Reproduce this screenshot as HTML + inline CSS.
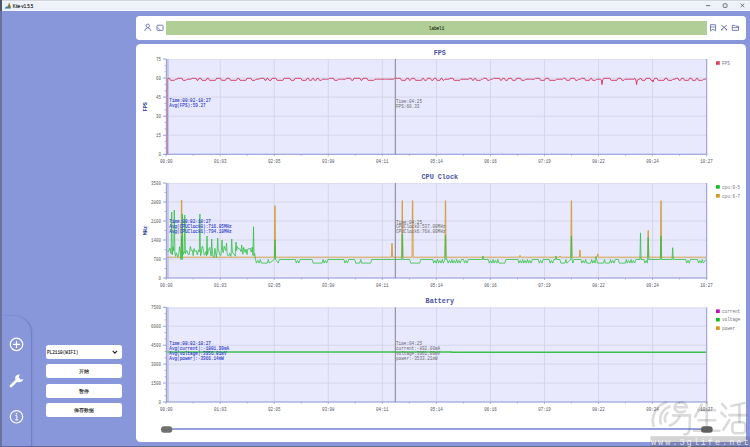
<!DOCTYPE html>
<html><head><meta charset="utf-8">
<style>
html,body{margin:0;padding:0;}
body{width:750px;height:447px;overflow:hidden;position:relative;background:#8896da;font-family:"Liberation Sans",sans-serif;}
.abs{position:absolute;}
#lb{left:0;top:0;width:1.8px;height:447px;background:#68749f;}
#title{left:2px;top:0;width:748px;height:11px;background:#edf1f9;border-top:1px solid #d2d6dc;box-sizing:border-box;box-shadow:inset 0 0.6px 0 #f6f9fd, inset 0 -0.8px 0 #f7f9fd;}
#ttext{left:13px;top:2.2px;font-size:6px;color:#202020;letter-spacing:-0.1px;}
#side{left:2px;top:315.5px;width:29px;height:140px;background:#8896da;border-top-right-radius:17px;box-shadow:1px 0 1.5px rgba(60,70,140,0.35);}
.btn{left:46px;width:76px;height:14px;background:#fff;border-radius:2.5px;font-size:5px;color:#202020;text-align:center;line-height:14px;-webkit-text-stroke:0.12px #202020;}
#topp{left:136px;top:15.7px;width:610px;height:24px;background:#fff;border-radius:3.5px;}
#green{left:166px;top:21px;width:541px;height:13.8px;background:#b0ce96;font-family:"Liberation Mono",monospace;font-size:4.6px;color:#404a38;text-align:center;line-height:13.8px;}
#mainp{left:135.8px;top:44.3px;width:610.4px;height:397.4px;background:#fff;border-radius:4.5px;}
svg{position:absolute;left:0;top:0;}
#bot{left:0;top:445.9px;width:750px;height:1.1px;background:#626a9a;}
</style></head><body>
<div class="abs" id="title"></div>
<svg width="750" height="12" viewBox="0 0 750 12">
  <path d="M4.8 8.6 Q5.6 6.2 7.8 6.6 L10.8 7.3 L10.8 8.6 Z" fill="#2378a8"/>
  <path d="M7.2 7.5 L9.2 2.4 L11 7.5Z" fill="#8a7a3a"/>
  <path d="M5.2 6.8 Q6.5 5.8 7.6 6.4 L7.3 7.4 Z" fill="#6fc6d8"/>
  <line x1="706" y1="5.6" x2="710.3" y2="5.6" stroke="#404040" stroke-width="0.7"/>
  <rect x="723.2" y="3.8" width="3.8" height="3.6" rx="0.8" fill="none" stroke="#404040" stroke-width="0.7"/>
  <path d="M740.6 3.7 L744.2 7.2 M744.2 3.7 L740.6 7.2" stroke="#404040" stroke-width="0.7"/>
</svg>
<svg width="750" height="12" viewBox="0 0 750 12"><text x="12.8" y="7.7" font-family='"Liberation Sans", sans-serif' font-size="5.8" fill="#111" stroke="#111" stroke-width="0.15" textLength="20.4" lengthAdjust="spacingAndGlyphs">Kite-v1.5.5</text></svg>
<div class="abs" id="lb"></div><div class="abs" style="left:0;top:0;width:1.8px;height:11px;background:#4c5468;"></div>
<div class="abs" id="side"></div>
<svg width="40" height="447" viewBox="0 0 40 447">
  <circle cx="16.5" cy="344.4" r="6.2" fill="none" stroke="#fff" stroke-width="1.2"/>
  <path d="M16.5 340.8 V348 M12.9 344.4 H20.1" stroke="#fff" stroke-width="1.2"/>
  <path d="M11 386 L17.8 379.4" stroke="#fff" stroke-width="2.7" stroke-linecap="round"/>
  <path d="M15.6 376.2 A4.2 4.2 0 1 0 23.4 379.2 L20.6 379.6 L18.9 377.6 L19.6 374.6 A4.2 4.2 0 0 0 15.6 376.2Z" fill="#fff"/>
  <circle cx="16.5" cy="416.8" r="6.2" fill="none" stroke="#fff" stroke-width="1.2"/>
  <circle cx="16.5" cy="413.7" r="0.8" fill="#fff"/>
  <path d="M15.3 415.6 H16.9 V419.8 M15.2 419.9 H18" stroke="#fff" stroke-width="1" fill="none"/>
</svg>
<div class="abs btn" style="top:345px;"></div>
<svg width="130" height="447" viewBox="0 0 130 447">
  <path d="M112.7 350.9 L114.9 353.1 L117.1 350.9" fill="none" stroke="#202020" stroke-width="1.1"/>
  <text x="47" y="354.2" font-family='"Liberation Mono", monospace' font-size="5.4" fill="#202020" stroke="#202020" stroke-width="0.12" textLength="31.5" lengthAdjust="spacingAndGlyphs">PL2110(WIFI)</text>
</svg>
<div class="abs btn" style="top:364.2px;">开始</div>
<div class="abs btn" style="top:383.5px;">暂停</div>
<div class="abs btn" style="top:402.6px;">保存数据</div>
<div class="abs" id="topp"></div>
<div class="abs" id="green"></div>
<svg width="750" height="40" viewBox="0 0 750 40"><text x="428.8" y="30" font-family='"Liberation Mono", monospace' font-size="5.4" fill="#283024" stroke="#283024" stroke-width="0.15" textLength="15.5" lengthAdjust="spacingAndGlyphs">label1</text></svg>
<svg width="750" height="447" viewBox="0 0 750 447">
  <!-- person -->
  <circle cx="147.8" cy="25.8" r="1.7" fill="none" stroke="#5a62a8" stroke-width="0.8"/>
  <path d="M144.6 31 Q145.5 27.8 147.8 27.8 Q150.1 27.8 151 31" fill="none" stroke="#5a62a8" stroke-width="0.8"/>
  <!-- image -->
  <rect x="157" y="25.2" width="6" height="5.2" rx="0.6" fill="none" stroke="#5a62a8" stroke-width="0.8"/>
  <path d="M157.4 27.2 L160 29.8" stroke="#5a62a8" stroke-width="0.7"/>
  <!-- save -->
  <path d="M710.5 24.7 H715.6 V30.8 L713 29.3 L710.5 30.8 Z" fill="none" stroke="#5a62a8" stroke-width="0.8"/>
  <path d="M710.5 27 H715.6" stroke="#5a62a8" stroke-width="0.7"/>
  <!-- scissors -->
  <path d="M721.4 25.2 L726.8 29.6 M726.8 25.2 L721.4 29.6" stroke="#5a62a8" stroke-width="0.9"/>
  <circle cx="721.8" cy="29.8" r="0.8" fill="#5a62a8"/><circle cx="726.4" cy="29.8" r="0.8" fill="#5a62a8"/>
  <!-- folder -->
  <path d="M732.3 25.4 H735 L735.8 26.3 H738.5 V30.4 H732.3 Z" fill="none" stroke="#5a62a8" stroke-width="0.8"/>
  <path d="M732.3 27.6 H738.5" stroke="#5a62a8" stroke-width="0.7"/>
</svg>
<div class="abs" id="mainp"></div>
<svg width="750" height="447" viewBox="0 0 750 447">
<text x="439.8" y="54.8" font-family='"Liberation Mono", monospace' font-size="8.0" font-weight="bold" fill="#4a52a0" text-anchor="middle" textLength="12.18" lengthAdjust="spacingAndGlyphs" >FPS</text>
<rect x="166.2" y="59" width="540.4" height="95.3" fill="#e9e9fe"/>
<line x1="166.2" y1="59.7" x2="706.6" y2="59.7" stroke="#dcdcf0" stroke-width="1"/>
<text x="161.1" y="61.1" font-family='"Liberation Mono", monospace' font-size="5.4" font-weight="normal" fill="#585858" text-anchor="end" textLength="5" lengthAdjust="spacingAndGlyphs" >75</text>
<line x1="163" y1="59" x2="166.2" y2="59" stroke="#8088c8" stroke-width="0.8"/>
<line x1="164.5" y1="65.35" x2="166.2" y2="65.35" stroke="#8088c8" stroke-width="0.6"/>
<line x1="164.5" y1="71.71" x2="166.2" y2="71.71" stroke="#8088c8" stroke-width="0.6"/>
<line x1="166.2" y1="78.06" x2="706.6" y2="78.06" stroke="#d0d0e6" stroke-width="0.8"/>
<text x="161.1" y="80.16" font-family='"Liberation Mono", monospace' font-size="5.4" font-weight="normal" fill="#585858" text-anchor="end" textLength="5" lengthAdjust="spacingAndGlyphs" >60</text>
<line x1="163" y1="78.06" x2="166.2" y2="78.06" stroke="#8088c8" stroke-width="0.8"/>
<line x1="164.5" y1="84.41" x2="166.2" y2="84.41" stroke="#8088c8" stroke-width="0.6"/>
<line x1="164.5" y1="90.77" x2="166.2" y2="90.77" stroke="#8088c8" stroke-width="0.6"/>
<line x1="166.2" y1="97.12" x2="706.6" y2="97.12" stroke="#d0d0e6" stroke-width="0.8"/>
<text x="161.1" y="99.22" font-family='"Liberation Mono", monospace' font-size="5.4" font-weight="normal" fill="#585858" text-anchor="end" textLength="5" lengthAdjust="spacingAndGlyphs" >45</text>
<line x1="163" y1="97.12" x2="166.2" y2="97.12" stroke="#8088c8" stroke-width="0.8"/>
<line x1="164.5" y1="103.47" x2="166.2" y2="103.47" stroke="#8088c8" stroke-width="0.6"/>
<line x1="164.5" y1="109.83" x2="166.2" y2="109.83" stroke="#8088c8" stroke-width="0.6"/>
<line x1="166.2" y1="116.18" x2="706.6" y2="116.18" stroke="#d0d0e6" stroke-width="0.8"/>
<text x="161.1" y="118.28" font-family='"Liberation Mono", monospace' font-size="5.4" font-weight="normal" fill="#585858" text-anchor="end" textLength="5" lengthAdjust="spacingAndGlyphs" >30</text>
<line x1="163" y1="116.18" x2="166.2" y2="116.18" stroke="#8088c8" stroke-width="0.8"/>
<line x1="164.5" y1="122.53" x2="166.2" y2="122.53" stroke="#8088c8" stroke-width="0.6"/>
<line x1="164.5" y1="128.89" x2="166.2" y2="128.89" stroke="#8088c8" stroke-width="0.6"/>
<line x1="166.2" y1="135.24" x2="706.6" y2="135.24" stroke="#d0d0e6" stroke-width="0.8"/>
<text x="161.1" y="137.34" font-family='"Liberation Mono", monospace' font-size="5.4" font-weight="normal" fill="#585858" text-anchor="end" textLength="5" lengthAdjust="spacingAndGlyphs" >15</text>
<line x1="163" y1="135.24" x2="166.2" y2="135.24" stroke="#8088c8" stroke-width="0.8"/>
<line x1="164.5" y1="141.59" x2="166.2" y2="141.59" stroke="#8088c8" stroke-width="0.6"/>
<line x1="164.5" y1="147.95" x2="166.2" y2="147.95" stroke="#8088c8" stroke-width="0.6"/>
<text x="161.1" y="156.4" font-family='"Liberation Mono", monospace' font-size="5.4" font-weight="normal" fill="#585858" text-anchor="end" textLength="2.5" lengthAdjust="spacingAndGlyphs" >0</text>
<line x1="163" y1="154.3" x2="166.2" y2="154.3" stroke="#8088c8" stroke-width="0.8"/>
<line x1="166.2" y1="154.3" x2="166.2" y2="156.3" stroke="#8088c8" stroke-width="0.6"/>
<line x1="193.22" y1="154.3" x2="193.22" y2="155.8" stroke="#8088c8" stroke-width="0.6"/>
<text x="166.2" y="162.8" font-family='"Liberation Mono", monospace' font-size="5.4" font-weight="normal" fill="#505060" text-anchor="middle" textLength="12.5" lengthAdjust="spacingAndGlyphs" >00:00</text>
<line x1="220.24" y1="59" x2="220.24" y2="154.3" stroke="#d0d0e6" stroke-width="0.8"/>
<line x1="220.24" y1="154.3" x2="220.24" y2="156.3" stroke="#8088c8" stroke-width="0.6"/>
<line x1="247.26" y1="154.3" x2="247.26" y2="155.8" stroke="#8088c8" stroke-width="0.6"/>
<text x="220.24" y="162.8" font-family='"Liberation Mono", monospace' font-size="5.4" font-weight="normal" fill="#505060" text-anchor="middle" textLength="12.5" lengthAdjust="spacingAndGlyphs" >01:03</text>
<line x1="274.28" y1="59" x2="274.28" y2="154.3" stroke="#d0d0e6" stroke-width="0.8"/>
<line x1="274.28" y1="154.3" x2="274.28" y2="156.3" stroke="#8088c8" stroke-width="0.6"/>
<line x1="301.3" y1="154.3" x2="301.3" y2="155.8" stroke="#8088c8" stroke-width="0.6"/>
<text x="274.28" y="162.8" font-family='"Liberation Mono", monospace' font-size="5.4" font-weight="normal" fill="#505060" text-anchor="middle" textLength="12.5" lengthAdjust="spacingAndGlyphs" >02:05</text>
<line x1="328.32" y1="59" x2="328.32" y2="154.3" stroke="#d0d0e6" stroke-width="0.8"/>
<line x1="328.32" y1="154.3" x2="328.32" y2="156.3" stroke="#8088c8" stroke-width="0.6"/>
<line x1="355.34" y1="154.3" x2="355.34" y2="155.8" stroke="#8088c8" stroke-width="0.6"/>
<text x="328.32" y="162.8" font-family='"Liberation Mono", monospace' font-size="5.4" font-weight="normal" fill="#505060" text-anchor="middle" textLength="12.5" lengthAdjust="spacingAndGlyphs" >03:08</text>
<line x1="382.36" y1="59" x2="382.36" y2="154.3" stroke="#d0d0e6" stroke-width="0.8"/>
<line x1="382.36" y1="154.3" x2="382.36" y2="156.3" stroke="#8088c8" stroke-width="0.6"/>
<line x1="409.38" y1="154.3" x2="409.38" y2="155.8" stroke="#8088c8" stroke-width="0.6"/>
<text x="382.36" y="162.8" font-family='"Liberation Mono", monospace' font-size="5.4" font-weight="normal" fill="#505060" text-anchor="middle" textLength="12.5" lengthAdjust="spacingAndGlyphs" >04:11</text>
<line x1="436.4" y1="59" x2="436.4" y2="154.3" stroke="#d0d0e6" stroke-width="0.8"/>
<line x1="436.4" y1="154.3" x2="436.4" y2="156.3" stroke="#8088c8" stroke-width="0.6"/>
<line x1="463.42" y1="154.3" x2="463.42" y2="155.8" stroke="#8088c8" stroke-width="0.6"/>
<text x="436.4" y="162.8" font-family='"Liberation Mono", monospace' font-size="5.4" font-weight="normal" fill="#505060" text-anchor="middle" textLength="12.5" lengthAdjust="spacingAndGlyphs" >05:14</text>
<line x1="490.44" y1="59" x2="490.44" y2="154.3" stroke="#d0d0e6" stroke-width="0.8"/>
<line x1="490.44" y1="154.3" x2="490.44" y2="156.3" stroke="#8088c8" stroke-width="0.6"/>
<line x1="517.46" y1="154.3" x2="517.46" y2="155.8" stroke="#8088c8" stroke-width="0.6"/>
<text x="490.44" y="162.8" font-family='"Liberation Mono", monospace' font-size="5.4" font-weight="normal" fill="#505060" text-anchor="middle" textLength="12.5" lengthAdjust="spacingAndGlyphs" >06:16</text>
<line x1="544.48" y1="59" x2="544.48" y2="154.3" stroke="#d0d0e6" stroke-width="0.8"/>
<line x1="544.48" y1="154.3" x2="544.48" y2="156.3" stroke="#8088c8" stroke-width="0.6"/>
<line x1="571.5" y1="154.3" x2="571.5" y2="155.8" stroke="#8088c8" stroke-width="0.6"/>
<text x="544.48" y="162.8" font-family='"Liberation Mono", monospace' font-size="5.4" font-weight="normal" fill="#505060" text-anchor="middle" textLength="12.5" lengthAdjust="spacingAndGlyphs" >07:19</text>
<line x1="598.52" y1="59" x2="598.52" y2="154.3" stroke="#d0d0e6" stroke-width="0.8"/>
<line x1="598.52" y1="154.3" x2="598.52" y2="156.3" stroke="#8088c8" stroke-width="0.6"/>
<line x1="625.54" y1="154.3" x2="625.54" y2="155.8" stroke="#8088c8" stroke-width="0.6"/>
<text x="598.52" y="162.8" font-family='"Liberation Mono", monospace' font-size="5.4" font-weight="normal" fill="#505060" text-anchor="middle" textLength="12.5" lengthAdjust="spacingAndGlyphs" >08:22</text>
<line x1="652.56" y1="59" x2="652.56" y2="154.3" stroke="#d0d0e6" stroke-width="0.8"/>
<line x1="652.56" y1="154.3" x2="652.56" y2="156.3" stroke="#8088c8" stroke-width="0.6"/>
<line x1="679.58" y1="154.3" x2="679.58" y2="155.8" stroke="#8088c8" stroke-width="0.6"/>
<text x="652.56" y="162.8" font-family='"Liberation Mono", monospace' font-size="5.4" font-weight="normal" fill="#505060" text-anchor="middle" textLength="12.5" lengthAdjust="spacingAndGlyphs" >09:24</text>
<line x1="706.6" y1="154.3" x2="706.6" y2="156.3" stroke="#8088c8" stroke-width="0.6"/>
<text x="706.6" y="162.8" font-family='"Liberation Mono", monospace' font-size="5.4" font-weight="normal" fill="#505060" text-anchor="middle" textLength="12.5" lengthAdjust="spacingAndGlyphs" >10:27</text>
<rect x="166" y="59" width="2.8" height="95.3" fill="#c4c4e4"/>
<line x1="166.3" y1="59" x2="166.3" y2="154.3" stroke="#8890d0" stroke-width="0.8"/>
<polyline points="167.3,154.3 167.3,79" fill="none" stroke="#c088b0" stroke-width="1.5" stroke-linejoin="round"/>
<polyline points="167.4,79 168,78.3 169.5,78.3 170.5,80.3 174.5,80.3 175.5,79.2 177,79.2 178,78.3 182,78.3 183,80.3 186,80.3 187,79.2 191,79.2 192,78.3 196,78.3 197,80.3 198,80.3 199,78.3 201,78.3 202,80.3 206,80.3 207,78.3 208.5,78.3 209.5,80.3 215.5,80.3 216.5,78.3 220.5,78.3 221.5,80.3 225.5,80.3 226.5,78.3 229.5,78.3 230.5,80.3 236.5,80.3 237.5,78.3 239,78.3 240,80.3 246,80.3 247,78.3 251,78.3 252,80.3 255,80.3 256,79.2 257,79.2 258,79.2 259,79.2 260,78.3 264,78.3 265,80.3 266,80.3 267,78.3 268,78.3 269,80.3 271,80.3 272,78.3 276,78.3 277,80.3 283,80.3 284,78.3 290,78.3 291,80.3 294,80.3 295,78.3 301,78.3 302,80.3 306,80.3 307,78.3 308.5,78.3 309.5,80.3 311.5,80.3 312.5,78.3 313.5,78.3 314.5,80.3 316,80.3 317,78.3 318.5,78.3 319.5,80.3 321.5,80.3 322.5,79.2 325.5,79.2 326.5,79.2 328.5,79.2 329.5,78.3 333.5,78.3 334.5,80.3 337.5,80.3 338.5,79.2 340.5,79.2 341.5,79.2 345.5,79.2 346.5,78.3 350.5,78.3 351.5,80.3 353,80.3 354,78.3 360,78.3 361,80.3 362,80.3 363,78.3 367,78.3 368,80.3 374,80.3 375,79.2 376.5,79.2 377.5,79.2 379.5,79.2 380.5,79.2 384.5,79.2 385.5,79.2 386.5,79.2 387.5,79.2 393.5,79.2 394.5,78.3 400.5,78.3 401.5,80.3 405.5,80.3 406.5,78.3 408.5,78.3 409.5,80.3 410.5,80.3 411.5,78.3 414.5,78.3 415.5,80.3 421.5,80.3 422.5,78.3 423.5,78.3 424.5,80.3 426.5,80.3 427.5,78.3 430.5,78.3 431.5,80.3 433,80.3 434,78.3 436,78.3 437,80.3 440,80.3 441,78.3 442,78.3 443,80.3 444,80.3 445,79.2 449,79.2 450,78.3 453,78.3 454,80.3 460,80.3 461,79.2 463,79.2 464,79.2 466,79.2 467,79.2 468.5,79.2 469.5,78.3 471.5,78.3 472.5,80.3 473.5,80.3 474.5,78.3 475.5,78.3 476.5,80.3 480.5,80.3 481.5,79.2 482.5,79.2 483.5,78.3 486.5,78.3 487.5,80.3 489.5,80.3 490.5,79.2 492.5,79.2 493.5,78.3 499.5,78.3 500.5,80.3 501.5,80.3 502.5,78.3 504.5,78.3 505.5,80.3 507.5,80.3 508.5,78.3 511.5,78.3 512.5,80.3 515.5,80.3 516.5,78.3 520.5,78.3 521.5,80.3 524.5,80.3 525.5,79.2 529.5,79.2 530.5,79.2 534.5,79.2 535.5,78.3 539.5,78.3 540.5,80.3 544.5,80.3 545.5,78.3 548.5,78.3 549.5,80.3 555.5,80.3 556.5,79.2 562.5,79.2 563.5,78.3 565.5,78.3 566.5,80.3 569.5,80.3 570.5,78.3 574.5,78.3 575.5,80.3 577.5,80.3 578.5,79.2 580.5,79.2 581.5,78.3 584.5,78.3 585.5,80.3 589.5,80.3 590.5,78.3 591.5,78.3 592.5,80.3 595.5,80.3 596.5,79.2 600.5,79.2 601.3,80 602,84.6 602.7,80 603,79.2 604,78.3 610,78.3 611,80.3 617,80.3 618,78.3 621,78.3 622,80.3 624,80.3 625,79.2 627,79.2 628,79.2 634,79.2 635,78.3 635.9,80 636.6,84.6 637.3,80 641,78.3 642,80.3 645,80.3 646,78.3 650,78.3 651,80.3 652,80.3 652.3,80 653,82 653.7,80 654,79.2 655,78.3 657,78.3 658,80.3 664,80.3 665,78.3 667,78.3 668,80.3 672,80.3 673,79.2 675,79.2 676,78.3 678,78.3 679,80.3 680.5,80.3 681.5,78.3 683.5,78.3 684.5,80.3 688.5,80.3 689.5,78.3 691.5,78.3 692.5,80.3 695.5,80.3 696.5,78.3 697.5,78.3 698.5,80.3 702.5,80.3 703.5,79.2 706.3,79" fill="none" stroke="#d6426a" stroke-width="1.0" stroke-linejoin="round"/>
<line x1="166" y1="154.3" x2="707.4" y2="154.3" stroke="#8a92d4" stroke-width="1.05"/>
<line x1="706.6" y1="59" x2="706.6" y2="154.3" stroke="#a4a8dc" stroke-width="1.3"/>
<line x1="395.3" y1="59" x2="395.3" y2="154.3" stroke="#82828e" stroke-width="1"/>
<text x="0" y="0" font-family='"Liberation Mono", monospace' font-size="6.2" font-weight="bold" fill="#2a3aa0" text-anchor="middle" textLength="9.3" lengthAdjust="spacingAndGlyphs" transform="translate(146.9,106.75) rotate(-90)">FPS</text>
<text x="169.3" y="102.3" font-family='"Liberation Mono", monospace' font-size="5.4" font-weight="normal" fill="#2c3cc8" text-anchor="start" textLength="41.6" lengthAdjust="spacingAndGlyphs" stroke="#2c3cc8" stroke-width="0.1">Time:00:02-10:27</text>
<text x="169.3" y="107.2" font-family='"Liberation Mono", monospace' font-size="5.4" font-weight="normal" fill="#2c3cc8" text-anchor="start" textLength="36.4" lengthAdjust="spacingAndGlyphs" stroke="#2c3cc8" stroke-width="0.1">Avg(FPS):59.27</text>
<text x="396" y="102.7" font-family='"Liberation Mono", monospace' font-size="5.4" font-weight="normal" fill="#686868" text-anchor="start" textLength="26" lengthAdjust="spacingAndGlyphs" >Time:04:25</text>
<text x="396" y="107.6" font-family='"Liberation Mono", monospace' font-size="5.4" font-weight="normal" fill="#686868" text-anchor="start" textLength="23.4" lengthAdjust="spacingAndGlyphs" >FPS:60.33</text>
<rect x="716" y="61.2" width="3.8" height="3.6" fill="#e04060"/>
<text x="722" y="64.7" font-family='"Liberation Mono", monospace' font-size="5.4" font-weight="normal" fill="#707080" text-anchor="start" textLength="7.8" lengthAdjust="spacingAndGlyphs" >FPS</text>
<text x="439.8" y="178.6" font-family='"Liberation Mono", monospace' font-size="8.0" font-weight="bold" fill="#4a52a0" text-anchor="middle" textLength="36.54" lengthAdjust="spacingAndGlyphs" >CPU Clock</text>
<rect x="166.2" y="183" width="540.4" height="95" fill="#e9e9fe"/>
<line x1="166.2" y1="183.7" x2="706.6" y2="183.7" stroke="#dcdcf0" stroke-width="1"/>
<text x="161.1" y="185.1" font-family='"Liberation Mono", monospace' font-size="5.4" font-weight="normal" fill="#585858" text-anchor="end" textLength="10" lengthAdjust="spacingAndGlyphs" >3500</text>
<line x1="163" y1="183" x2="166.2" y2="183" stroke="#8088c8" stroke-width="0.8"/>
<line x1="164.5" y1="192.5" x2="166.2" y2="192.5" stroke="#8088c8" stroke-width="0.6"/>
<line x1="166.2" y1="202" x2="706.6" y2="202" stroke="#d0d0e6" stroke-width="0.8"/>
<text x="161.1" y="204.1" font-family='"Liberation Mono", monospace' font-size="5.4" font-weight="normal" fill="#585858" text-anchor="end" textLength="10" lengthAdjust="spacingAndGlyphs" >2800</text>
<line x1="163" y1="202" x2="166.2" y2="202" stroke="#8088c8" stroke-width="0.8"/>
<line x1="164.5" y1="211.5" x2="166.2" y2="211.5" stroke="#8088c8" stroke-width="0.6"/>
<line x1="166.2" y1="221" x2="706.6" y2="221" stroke="#d0d0e6" stroke-width="0.8"/>
<text x="161.1" y="223.1" font-family='"Liberation Mono", monospace' font-size="5.4" font-weight="normal" fill="#585858" text-anchor="end" textLength="10" lengthAdjust="spacingAndGlyphs" >2100</text>
<line x1="163" y1="221" x2="166.2" y2="221" stroke="#8088c8" stroke-width="0.8"/>
<line x1="164.5" y1="230.5" x2="166.2" y2="230.5" stroke="#8088c8" stroke-width="0.6"/>
<line x1="166.2" y1="240" x2="706.6" y2="240" stroke="#d0d0e6" stroke-width="0.8"/>
<text x="161.1" y="242.1" font-family='"Liberation Mono", monospace' font-size="5.4" font-weight="normal" fill="#585858" text-anchor="end" textLength="10" lengthAdjust="spacingAndGlyphs" >1400</text>
<line x1="163" y1="240" x2="166.2" y2="240" stroke="#8088c8" stroke-width="0.8"/>
<line x1="164.5" y1="249.5" x2="166.2" y2="249.5" stroke="#8088c8" stroke-width="0.6"/>
<line x1="166.2" y1="259" x2="706.6" y2="259" stroke="#d0d0e6" stroke-width="0.8"/>
<text x="161.1" y="261.1" font-family='"Liberation Mono", monospace' font-size="5.4" font-weight="normal" fill="#585858" text-anchor="end" textLength="7.5" lengthAdjust="spacingAndGlyphs" >700</text>
<line x1="163" y1="259" x2="166.2" y2="259" stroke="#8088c8" stroke-width="0.8"/>
<line x1="164.5" y1="268.5" x2="166.2" y2="268.5" stroke="#8088c8" stroke-width="0.6"/>
<text x="161.1" y="280.1" font-family='"Liberation Mono", monospace' font-size="5.4" font-weight="normal" fill="#585858" text-anchor="end" textLength="2.5" lengthAdjust="spacingAndGlyphs" >0</text>
<line x1="163" y1="278" x2="166.2" y2="278" stroke="#8088c8" stroke-width="0.8"/>
<line x1="166.2" y1="278" x2="166.2" y2="280" stroke="#8088c8" stroke-width="0.6"/>
<line x1="193.22" y1="278" x2="193.22" y2="279.5" stroke="#8088c8" stroke-width="0.6"/>
<text x="166.2" y="286.5" font-family='"Liberation Mono", monospace' font-size="5.4" font-weight="normal" fill="#505060" text-anchor="middle" textLength="12.5" lengthAdjust="spacingAndGlyphs" >00:00</text>
<line x1="220.24" y1="183" x2="220.24" y2="278" stroke="#d0d0e6" stroke-width="0.8"/>
<line x1="220.24" y1="278" x2="220.24" y2="280" stroke="#8088c8" stroke-width="0.6"/>
<line x1="247.26" y1="278" x2="247.26" y2="279.5" stroke="#8088c8" stroke-width="0.6"/>
<text x="220.24" y="286.5" font-family='"Liberation Mono", monospace' font-size="5.4" font-weight="normal" fill="#505060" text-anchor="middle" textLength="12.5" lengthAdjust="spacingAndGlyphs" >01:03</text>
<line x1="274.28" y1="183" x2="274.28" y2="278" stroke="#d0d0e6" stroke-width="0.8"/>
<line x1="274.28" y1="278" x2="274.28" y2="280" stroke="#8088c8" stroke-width="0.6"/>
<line x1="301.3" y1="278" x2="301.3" y2="279.5" stroke="#8088c8" stroke-width="0.6"/>
<text x="274.28" y="286.5" font-family='"Liberation Mono", monospace' font-size="5.4" font-weight="normal" fill="#505060" text-anchor="middle" textLength="12.5" lengthAdjust="spacingAndGlyphs" >02:05</text>
<line x1="328.32" y1="183" x2="328.32" y2="278" stroke="#d0d0e6" stroke-width="0.8"/>
<line x1="328.32" y1="278" x2="328.32" y2="280" stroke="#8088c8" stroke-width="0.6"/>
<line x1="355.34" y1="278" x2="355.34" y2="279.5" stroke="#8088c8" stroke-width="0.6"/>
<text x="328.32" y="286.5" font-family='"Liberation Mono", monospace' font-size="5.4" font-weight="normal" fill="#505060" text-anchor="middle" textLength="12.5" lengthAdjust="spacingAndGlyphs" >03:08</text>
<line x1="382.36" y1="183" x2="382.36" y2="278" stroke="#d0d0e6" stroke-width="0.8"/>
<line x1="382.36" y1="278" x2="382.36" y2="280" stroke="#8088c8" stroke-width="0.6"/>
<line x1="409.38" y1="278" x2="409.38" y2="279.5" stroke="#8088c8" stroke-width="0.6"/>
<text x="382.36" y="286.5" font-family='"Liberation Mono", monospace' font-size="5.4" font-weight="normal" fill="#505060" text-anchor="middle" textLength="12.5" lengthAdjust="spacingAndGlyphs" >04:11</text>
<line x1="436.4" y1="183" x2="436.4" y2="278" stroke="#d0d0e6" stroke-width="0.8"/>
<line x1="436.4" y1="278" x2="436.4" y2="280" stroke="#8088c8" stroke-width="0.6"/>
<line x1="463.42" y1="278" x2="463.42" y2="279.5" stroke="#8088c8" stroke-width="0.6"/>
<text x="436.4" y="286.5" font-family='"Liberation Mono", monospace' font-size="5.4" font-weight="normal" fill="#505060" text-anchor="middle" textLength="12.5" lengthAdjust="spacingAndGlyphs" >05:14</text>
<line x1="490.44" y1="183" x2="490.44" y2="278" stroke="#d0d0e6" stroke-width="0.8"/>
<line x1="490.44" y1="278" x2="490.44" y2="280" stroke="#8088c8" stroke-width="0.6"/>
<line x1="517.46" y1="278" x2="517.46" y2="279.5" stroke="#8088c8" stroke-width="0.6"/>
<text x="490.44" y="286.5" font-family='"Liberation Mono", monospace' font-size="5.4" font-weight="normal" fill="#505060" text-anchor="middle" textLength="12.5" lengthAdjust="spacingAndGlyphs" >06:16</text>
<line x1="544.48" y1="183" x2="544.48" y2="278" stroke="#d0d0e6" stroke-width="0.8"/>
<line x1="544.48" y1="278" x2="544.48" y2="280" stroke="#8088c8" stroke-width="0.6"/>
<line x1="571.5" y1="278" x2="571.5" y2="279.5" stroke="#8088c8" stroke-width="0.6"/>
<text x="544.48" y="286.5" font-family='"Liberation Mono", monospace' font-size="5.4" font-weight="normal" fill="#505060" text-anchor="middle" textLength="12.5" lengthAdjust="spacingAndGlyphs" >07:19</text>
<line x1="598.52" y1="183" x2="598.52" y2="278" stroke="#d0d0e6" stroke-width="0.8"/>
<line x1="598.52" y1="278" x2="598.52" y2="280" stroke="#8088c8" stroke-width="0.6"/>
<line x1="625.54" y1="278" x2="625.54" y2="279.5" stroke="#8088c8" stroke-width="0.6"/>
<text x="598.52" y="286.5" font-family='"Liberation Mono", monospace' font-size="5.4" font-weight="normal" fill="#505060" text-anchor="middle" textLength="12.5" lengthAdjust="spacingAndGlyphs" >08:22</text>
<line x1="652.56" y1="183" x2="652.56" y2="278" stroke="#d0d0e6" stroke-width="0.8"/>
<line x1="652.56" y1="278" x2="652.56" y2="280" stroke="#8088c8" stroke-width="0.6"/>
<line x1="679.58" y1="278" x2="679.58" y2="279.5" stroke="#8088c8" stroke-width="0.6"/>
<text x="652.56" y="286.5" font-family='"Liberation Mono", monospace' font-size="5.4" font-weight="normal" fill="#505060" text-anchor="middle" textLength="12.5" lengthAdjust="spacingAndGlyphs" >09:24</text>
<line x1="706.6" y1="278" x2="706.6" y2="280" stroke="#8088c8" stroke-width="0.6"/>
<text x="706.6" y="286.5" font-family='"Liberation Mono", monospace' font-size="5.4" font-weight="normal" fill="#505060" text-anchor="middle" textLength="12.5" lengthAdjust="spacingAndGlyphs" >10:27</text>
<rect x="166" y="183" width="2.8" height="95" fill="#c4c4e4"/>
<line x1="166.3" y1="183" x2="166.3" y2="278" stroke="#8890d0" stroke-width="0.8"/>
<polyline points="167.4,257.2 181,257.2 181.45,200 181.75,200 182.2,257.2 274.4,257.2 274.85,205.8 275.15,205.8 275.6,257.2 391.4,257.2 391.85,243.4 392.15,243.4 392.6,257.2 401.7,257.2 402.15,200.7 402.45,200.7 402.9,257.2 412,257.2 412.45,200.7 412.75,200.7 413.2,257.2 444.9,257.2 445.35,200.7 445.65,200.7 446.1,257.2 519.4,257.2 519.85,255.5 520.15,255.5 520.6,257.2 559.4,257.2 559.85,256 560.15,256 560.6,257.2 570.8,257.2 571.25,200.7 571.55,200.7 572,257.2 579.3,257.2 579.75,250 580.05,250 580.5,257.2 597.1,257.2 597.55,254 597.85,254 598.3,257.2 647.6,257.2 648.05,230.5 648.35,230.5 648.8,257.2 660.4,257.2 660.85,200.7 661.15,200.7 661.6,257.2 706,257.2" fill="none" stroke="#d49a34" stroke-width="0.9" stroke-linejoin="round"/>
<polyline points="167.4,251.2 168.9,251.2 169.9,248.12 171.1,253.78 171.7,212 172.3,254.76 172.9,247.08 173.7,250.85 174.3,210 174.9,253.23 175.5,256.24 176.3,252.85 177.8,257.09 178.8,253.17 179.6,246.68 180.6,256.11 181,259.5 181.6,236 182.2,259.5 182.3,214 182.9,255.05 183.5,251.97 184.2,253 184.8,215 185.4,253.97 186,251.26 187.2,250.68 188,254.14 189.2,254.72 190.4,246.34 191.2,250.6 192.4,250.44 193.2,255.74 194,248.46 194.8,251.4 196.3,250.83 197.3,254.95 198.5,249.87 199.3,252 199.9,214 200.5,255.78 201.1,254.72 201.9,247.55 202.7,246.13 204.2,255.17 205.2,253.84 206.2,251.15 206.4,255.91 207,236 207.6,254.62 208.2,250.82 209.7,247.34 211.1,255.94 211.7,239 212.3,250 212.9,255.94 214.1,257.48 214.9,248.42 216.4,257.45 217.1,250.25 217.7,238 218.3,250.88 218.9,251.08 219.7,254.89 220.9,255.55 221.4,250.44 222,240 222.6,250.54 223.2,252.7 224.2,246.18 225.4,250.27 225.9,250.76 226.5,243 227.1,253.52 227.7,255.57 228.7,255.97 229.7,253.21 230.9,256.45 231.1,254.35 231.7,239 232.3,250.95 232.9,253.23 233.9,253.9 235.4,256.15 235.4,252.53 236,242 236.6,250.62 237.2,246.45 238.4,248.74 239.9,248.96 241.1,251.76 241.7,245 242.3,251.05 242.9,254.28 243.7,247.45 245.2,252.43 246,249.22 247,254.61 247.8,249.1 249.3,248.86 250.1,248.03 251.3,252.11 252.3,247.06 252.9,255.35 253.5,226.7 254.1,255.88 254.7,253.55 255.5,259.5 256.5,263.1 257.8,260.5 259.1,263.1 260.3,259.5 261.3,263.1 267.3,263.1 268.3,259.5 269.3,263.1 274.4,259.5 275,240 275.6,259.5 278.3,263.1 279.3,259.5 281.3,259.5 293.3,259.5 295.3,259.5 296.3,263.1 297.6,260.5 298.9,263.1 300.1,259.5 302.1,259.5 310.1,259.5 312.1,259.5 313.1,263.1 322.1,263.1 323.1,259.5 324.1,263.1 325.4,260.5 326.7,263.1 327.9,259.5 331.9,259.5 343.9,259.5 344.9,263.1 346.2,260.5 347.5,263.1 348.7,259.5 354.7,259.5 355.7,263.1 359.7,263.1 360.7,259.5 361.7,263.1 370.7,263.1 371.7,259.5 383.7,259.5 391.7,259.5 393.7,259.5 401.7,259.5 402.3,234 402.9,259.5 405.7,259.5 409.7,259.5 410.7,263.1 419.7,263.1 420.7,259.5 432.7,259.5 433.7,263.1 435,260.5 436.3,263.1 437.5,259.5 438.5,263.1 439.8,260.5 441.1,263.1 442.3,259.5 443.3,263.1 444.6,260.5 444.9,259.5 445.5,235 446.1,259.5 447.1,259.5 448.1,263.1 449.4,260.5 450.7,263.1 451.9,259.5 452.9,263.1 454.2,260.5 455.5,263.1 456.7,259.5 457.7,263.1 459,260.5 460.3,263.1 461.5,259.5 463.5,259.5 464.5,263.1 465.8,260.5 467.1,263.1 468.3,259.5 480.3,259.5 482.4,259.5 483,256 483.6,259.5 488.3,259.5 489.3,263.1 490.6,260.5 491.9,263.1 493.1,259.5 494.1,263.1 495.4,260.5 496.7,263.1 497.9,259.5 498.9,263.1 504.9,263.1 505.9,259.5 517.9,259.5 518.9,263.1 520.2,260.5 521.5,263.1 522.7,259.5 523.7,263.1 525,260.5 526.3,263.1 527.5,259.5 528.5,263.1 529.8,260.5 531.1,263.1 532.3,259.5 538.3,259.5 539.3,263.1 540.6,260.5 541.9,263.1 543.1,259.5 549.1,259.5 550.1,263.1 551.4,260.5 552.7,263.1 553.9,259.5 555.4,259.5 556,256 556.6,259.5 559.9,259.5 560.9,263.1 564.9,263.1 565.9,259.5 566.9,263.1 570.8,259.5 571.4,236 572,259.5 572.9,263.1 573.9,259.5 577.9,259.5 580.9,259.5 581.9,263.1 583.2,260.5 584.5,263.1 585.7,259.5 586.7,263.1 590.7,263.1 591.7,259.5 592.7,263.1 594,260.5 595.3,263.1 595.4,259.5 596,256.5 596.6,259.5 597.5,263.1 603.5,263.1 604.5,259.5 605.5,263.1 609.5,263.1 610.5,259.5 611.5,263.1 612.8,260.5 614.1,263.1 615.3,259.5 618.3,259.5 619.3,263.1 625.3,263.1 626.3,259.5 627.3,263.1 628.6,260.5 629.9,263.1 631.1,259.5 632.1,263.1 633.4,260.5 634.7,263.1 635.9,259.5 639.9,259.5 640.5,232.9 641.1,259.5 643.9,259.5 644.9,263.1 646.2,260.5 647.5,263.1 647.6,259.5 648.2,237.5 648.8,259.5 650.7,259.5 658.7,259.5 660.4,259.5 661,236 661.6,259.5 670.7,259.5 672.1,259.5 672.7,247.7 673.3,259.5 674.7,259.5 682.7,259.5 685.7,259.5 686.7,263.1 688,260.5 689.3,263.1 690.5,259.5 694.5,259.5 697.5,259.5 698.5,263.1 699.8,260.5 701.1,263.1 702.3,259.5 703.3,263.1 706,259.5" fill="none" stroke="#30c040" stroke-width="0.8" stroke-linejoin="round"/>
<line x1="166" y1="278" x2="707.4" y2="278" stroke="#8a92d4" stroke-width="1.05"/>
<line x1="706.6" y1="183" x2="706.6" y2="278" stroke="#a4a8dc" stroke-width="1.3"/>
<line x1="395.3" y1="183" x2="395.3" y2="278" stroke="#82828e" stroke-width="1"/>
<text x="0" y="0" font-family='"Liberation Mono", monospace' font-size="6.2" font-weight="bold" fill="#2a3aa0" text-anchor="middle" textLength="9.3" lengthAdjust="spacingAndGlyphs" transform="translate(146.9,230.6) rotate(-90)">MHz</text>
<text x="169.3" y="223.1" font-family='"Liberation Mono", monospace' font-size="5.4" font-weight="normal" fill="#2c3cc8" text-anchor="start" textLength="41.6" lengthAdjust="spacingAndGlyphs" stroke="#2c3cc8" stroke-width="0.1">Time:00:02-10:27</text>
<text x="169.3" y="228" font-family='"Liberation Mono", monospace' font-size="5.4" font-weight="normal" fill="#2c3cc8" text-anchor="start" textLength="62.4" lengthAdjust="spacingAndGlyphs" stroke="#2c3cc8" stroke-width="0.1">Avg(CPUClock0):716.05MHz</text>
<text x="169.3" y="232.9" font-family='"Liberation Mono", monospace' font-size="5.4" font-weight="normal" fill="#2c3cc8" text-anchor="start" textLength="62.4" lengthAdjust="spacingAndGlyphs" stroke="#2c3cc8" stroke-width="0.1">Avg(CPUClock6):794.10MHz</text>
<text x="396" y="223.5" font-family='"Liberation Mono", monospace' font-size="5.4" font-weight="normal" fill="#686868" text-anchor="start" textLength="26" lengthAdjust="spacingAndGlyphs" >Time:04:25</text>
<text x="396" y="228.4" font-family='"Liberation Mono", monospace' font-size="5.4" font-weight="normal" fill="#686868" text-anchor="start" textLength="49.4" lengthAdjust="spacingAndGlyphs" >CPUClock0:537.00MHz</text>
<text x="396" y="233.3" font-family='"Liberation Mono", monospace' font-size="5.4" font-weight="normal" fill="#686868" text-anchor="start" textLength="49.4" lengthAdjust="spacingAndGlyphs" >CPUClock6:768.00MHz</text>
<rect x="716" y="185.1" width="3.8" height="3.6" fill="#10c020"/>
<text x="722" y="188.6" font-family='"Liberation Mono", monospace' font-size="5.4" font-weight="normal" fill="#707080" text-anchor="start" textLength="18.2" lengthAdjust="spacingAndGlyphs" >cpu:0-5</text>
<rect x="716" y="194" width="3.8" height="3.6" fill="#d09a20"/>
<text x="722" y="197.5" font-family='"Liberation Mono", monospace' font-size="5.4" font-weight="normal" fill="#707080" text-anchor="start" textLength="18.2" lengthAdjust="spacingAndGlyphs" >cpu:6-7</text>
<text x="439.8" y="302.7" font-family='"Liberation Mono", monospace' font-size="8.0" font-weight="bold" fill="#4a52a0" text-anchor="middle" textLength="28.42" lengthAdjust="spacingAndGlyphs" >Battery</text>
<rect x="166.2" y="307.3" width="540.4" height="94.7" fill="#e9e9fe"/>
<line x1="166.2" y1="308" x2="706.6" y2="308" stroke="#dcdcf0" stroke-width="1"/>
<text x="161.1" y="309.4" font-family='"Liberation Mono", monospace' font-size="5.4" font-weight="normal" fill="#585858" text-anchor="end" textLength="10" lengthAdjust="spacingAndGlyphs" >7500</text>
<line x1="163" y1="307.3" x2="166.2" y2="307.3" stroke="#8088c8" stroke-width="0.8"/>
<line x1="164.5" y1="313.61" x2="166.2" y2="313.61" stroke="#8088c8" stroke-width="0.6"/>
<line x1="164.5" y1="319.93" x2="166.2" y2="319.93" stroke="#8088c8" stroke-width="0.6"/>
<line x1="166.2" y1="326.24" x2="706.6" y2="326.24" stroke="#d0d0e6" stroke-width="0.8"/>
<text x="161.1" y="328.34" font-family='"Liberation Mono", monospace' font-size="5.4" font-weight="normal" fill="#585858" text-anchor="end" textLength="10" lengthAdjust="spacingAndGlyphs" >6000</text>
<line x1="163" y1="326.24" x2="166.2" y2="326.24" stroke="#8088c8" stroke-width="0.8"/>
<line x1="164.5" y1="332.55" x2="166.2" y2="332.55" stroke="#8088c8" stroke-width="0.6"/>
<line x1="164.5" y1="338.87" x2="166.2" y2="338.87" stroke="#8088c8" stroke-width="0.6"/>
<line x1="166.2" y1="345.18" x2="706.6" y2="345.18" stroke="#d0d0e6" stroke-width="0.8"/>
<text x="161.1" y="347.28" font-family='"Liberation Mono", monospace' font-size="5.4" font-weight="normal" fill="#585858" text-anchor="end" textLength="10" lengthAdjust="spacingAndGlyphs" >4500</text>
<line x1="163" y1="345.18" x2="166.2" y2="345.18" stroke="#8088c8" stroke-width="0.8"/>
<line x1="164.5" y1="351.49" x2="166.2" y2="351.49" stroke="#8088c8" stroke-width="0.6"/>
<line x1="164.5" y1="357.81" x2="166.2" y2="357.81" stroke="#8088c8" stroke-width="0.6"/>
<line x1="166.2" y1="364.12" x2="706.6" y2="364.12" stroke="#d0d0e6" stroke-width="0.8"/>
<text x="161.1" y="366.22" font-family='"Liberation Mono", monospace' font-size="5.4" font-weight="normal" fill="#585858" text-anchor="end" textLength="10" lengthAdjust="spacingAndGlyphs" >3000</text>
<line x1="163" y1="364.12" x2="166.2" y2="364.12" stroke="#8088c8" stroke-width="0.8"/>
<line x1="164.5" y1="370.43" x2="166.2" y2="370.43" stroke="#8088c8" stroke-width="0.6"/>
<line x1="164.5" y1="376.75" x2="166.2" y2="376.75" stroke="#8088c8" stroke-width="0.6"/>
<line x1="166.2" y1="383.06" x2="706.6" y2="383.06" stroke="#d0d0e6" stroke-width="0.8"/>
<text x="161.1" y="385.16" font-family='"Liberation Mono", monospace' font-size="5.4" font-weight="normal" fill="#585858" text-anchor="end" textLength="10" lengthAdjust="spacingAndGlyphs" >1500</text>
<line x1="163" y1="383.06" x2="166.2" y2="383.06" stroke="#8088c8" stroke-width="0.8"/>
<line x1="164.5" y1="389.37" x2="166.2" y2="389.37" stroke="#8088c8" stroke-width="0.6"/>
<line x1="164.5" y1="395.69" x2="166.2" y2="395.69" stroke="#8088c8" stroke-width="0.6"/>
<text x="161.1" y="404.1" font-family='"Liberation Mono", monospace' font-size="5.4" font-weight="normal" fill="#585858" text-anchor="end" textLength="2.5" lengthAdjust="spacingAndGlyphs" >0</text>
<line x1="163" y1="402" x2="166.2" y2="402" stroke="#8088c8" stroke-width="0.8"/>
<line x1="166.2" y1="402" x2="166.2" y2="404" stroke="#8088c8" stroke-width="0.6"/>
<line x1="193.22" y1="402" x2="193.22" y2="403.5" stroke="#8088c8" stroke-width="0.6"/>
<text x="166.2" y="410.5" font-family='"Liberation Mono", monospace' font-size="5.4" font-weight="normal" fill="#505060" text-anchor="middle" textLength="12.5" lengthAdjust="spacingAndGlyphs" >00:00</text>
<line x1="220.24" y1="307.3" x2="220.24" y2="402" stroke="#d0d0e6" stroke-width="0.8"/>
<line x1="220.24" y1="402" x2="220.24" y2="404" stroke="#8088c8" stroke-width="0.6"/>
<line x1="247.26" y1="402" x2="247.26" y2="403.5" stroke="#8088c8" stroke-width="0.6"/>
<text x="220.24" y="410.5" font-family='"Liberation Mono", monospace' font-size="5.4" font-weight="normal" fill="#505060" text-anchor="middle" textLength="12.5" lengthAdjust="spacingAndGlyphs" >01:03</text>
<line x1="274.28" y1="307.3" x2="274.28" y2="402" stroke="#d0d0e6" stroke-width="0.8"/>
<line x1="274.28" y1="402" x2="274.28" y2="404" stroke="#8088c8" stroke-width="0.6"/>
<line x1="301.3" y1="402" x2="301.3" y2="403.5" stroke="#8088c8" stroke-width="0.6"/>
<text x="274.28" y="410.5" font-family='"Liberation Mono", monospace' font-size="5.4" font-weight="normal" fill="#505060" text-anchor="middle" textLength="12.5" lengthAdjust="spacingAndGlyphs" >02:05</text>
<line x1="328.32" y1="307.3" x2="328.32" y2="402" stroke="#d0d0e6" stroke-width="0.8"/>
<line x1="328.32" y1="402" x2="328.32" y2="404" stroke="#8088c8" stroke-width="0.6"/>
<line x1="355.34" y1="402" x2="355.34" y2="403.5" stroke="#8088c8" stroke-width="0.6"/>
<text x="328.32" y="410.5" font-family='"Liberation Mono", monospace' font-size="5.4" font-weight="normal" fill="#505060" text-anchor="middle" textLength="12.5" lengthAdjust="spacingAndGlyphs" >03:08</text>
<line x1="382.36" y1="307.3" x2="382.36" y2="402" stroke="#d0d0e6" stroke-width="0.8"/>
<line x1="382.36" y1="402" x2="382.36" y2="404" stroke="#8088c8" stroke-width="0.6"/>
<line x1="409.38" y1="402" x2="409.38" y2="403.5" stroke="#8088c8" stroke-width="0.6"/>
<text x="382.36" y="410.5" font-family='"Liberation Mono", monospace' font-size="5.4" font-weight="normal" fill="#505060" text-anchor="middle" textLength="12.5" lengthAdjust="spacingAndGlyphs" >04:11</text>
<line x1="436.4" y1="307.3" x2="436.4" y2="402" stroke="#d0d0e6" stroke-width="0.8"/>
<line x1="436.4" y1="402" x2="436.4" y2="404" stroke="#8088c8" stroke-width="0.6"/>
<line x1="463.42" y1="402" x2="463.42" y2="403.5" stroke="#8088c8" stroke-width="0.6"/>
<text x="436.4" y="410.5" font-family='"Liberation Mono", monospace' font-size="5.4" font-weight="normal" fill="#505060" text-anchor="middle" textLength="12.5" lengthAdjust="spacingAndGlyphs" >05:14</text>
<line x1="490.44" y1="307.3" x2="490.44" y2="402" stroke="#d0d0e6" stroke-width="0.8"/>
<line x1="490.44" y1="402" x2="490.44" y2="404" stroke="#8088c8" stroke-width="0.6"/>
<line x1="517.46" y1="402" x2="517.46" y2="403.5" stroke="#8088c8" stroke-width="0.6"/>
<text x="490.44" y="410.5" font-family='"Liberation Mono", monospace' font-size="5.4" font-weight="normal" fill="#505060" text-anchor="middle" textLength="12.5" lengthAdjust="spacingAndGlyphs" >06:16</text>
<line x1="544.48" y1="307.3" x2="544.48" y2="402" stroke="#d0d0e6" stroke-width="0.8"/>
<line x1="544.48" y1="402" x2="544.48" y2="404" stroke="#8088c8" stroke-width="0.6"/>
<line x1="571.5" y1="402" x2="571.5" y2="403.5" stroke="#8088c8" stroke-width="0.6"/>
<text x="544.48" y="410.5" font-family='"Liberation Mono", monospace' font-size="5.4" font-weight="normal" fill="#505060" text-anchor="middle" textLength="12.5" lengthAdjust="spacingAndGlyphs" >07:19</text>
<line x1="598.52" y1="307.3" x2="598.52" y2="402" stroke="#d0d0e6" stroke-width="0.8"/>
<line x1="598.52" y1="402" x2="598.52" y2="404" stroke="#8088c8" stroke-width="0.6"/>
<line x1="625.54" y1="402" x2="625.54" y2="403.5" stroke="#8088c8" stroke-width="0.6"/>
<text x="598.52" y="410.5" font-family='"Liberation Mono", monospace' font-size="5.4" font-weight="normal" fill="#505060" text-anchor="middle" textLength="12.5" lengthAdjust="spacingAndGlyphs" >08:22</text>
<line x1="652.56" y1="307.3" x2="652.56" y2="402" stroke="#d0d0e6" stroke-width="0.8"/>
<line x1="652.56" y1="402" x2="652.56" y2="404" stroke="#8088c8" stroke-width="0.6"/>
<line x1="679.58" y1="402" x2="679.58" y2="403.5" stroke="#8088c8" stroke-width="0.6"/>
<text x="652.56" y="410.5" font-family='"Liberation Mono", monospace' font-size="5.4" font-weight="normal" fill="#505060" text-anchor="middle" textLength="12.5" lengthAdjust="spacingAndGlyphs" >09:24</text>
<line x1="706.6" y1="402" x2="706.6" y2="404" stroke="#8088c8" stroke-width="0.6"/>
<text x="706.6" y="410.5" font-family='"Liberation Mono", monospace' font-size="5.4" font-weight="normal" fill="#505060" text-anchor="middle" textLength="12.5" lengthAdjust="spacingAndGlyphs" >10:27</text>
<rect x="166" y="307.3" width="2.8" height="94.7" fill="#c4c4e4"/>
<line x1="166.3" y1="307.3" x2="166.3" y2="402" stroke="#8890d0" stroke-width="0.8"/>
<polyline points="167.4,351.9 451.5,351.9 452,352.3 706,352.3" fill="none" stroke="#3cc04c" stroke-width="1.5" stroke-linejoin="round"/>
<line x1="166" y1="402" x2="707.4" y2="402" stroke="#8a92d4" stroke-width="1.05"/>
<line x1="706.6" y1="307.3" x2="706.6" y2="402" stroke="#a4a8dc" stroke-width="1.3"/>
<line x1="395.3" y1="307.3" x2="395.3" y2="402" stroke="#82828e" stroke-width="1"/>
<text x="169.3" y="345" font-family='"Liberation Mono", monospace' font-size="5.4" font-weight="normal" fill="#2c3cc8" text-anchor="start" textLength="41.6" lengthAdjust="spacingAndGlyphs" stroke="#2c3cc8" stroke-width="0.1">Time:00:02-10:27</text>
<text x="169.3" y="349.9" font-family='"Liberation Mono", monospace' font-size="5.4" font-weight="normal" fill="#2c3cc8" text-anchor="start" textLength="59.8" lengthAdjust="spacingAndGlyphs" stroke="#2c3cc8" stroke-width="0.1">Avg(current):-1001.99mA</text>
<text x="169.3" y="354.8" font-family='"Liberation Mono", monospace' font-size="5.4" font-weight="normal" fill="#2c3cc8" text-anchor="start" textLength="57.2" lengthAdjust="spacingAndGlyphs" stroke="#2c3cc8" stroke-width="0.1">Avg(voltage):3956.01mV</text>
<text x="169.3" y="359.7" font-family='"Liberation Mono", monospace' font-size="5.4" font-weight="normal" fill="#2c3cc8" text-anchor="start" textLength="54.6" lengthAdjust="spacingAndGlyphs" stroke="#2c3cc8" stroke-width="0.1">Avg(power):-3966.14mW</text>
<text x="396" y="345.4" font-family='"Liberation Mono", monospace' font-size="5.4" font-weight="normal" fill="#686868" text-anchor="start" textLength="26" lengthAdjust="spacingAndGlyphs" >Time:04:25</text>
<text x="396" y="350.3" font-family='"Liberation Mono", monospace' font-size="5.4" font-weight="normal" fill="#686868" text-anchor="start" textLength="44.2" lengthAdjust="spacingAndGlyphs" >current:-892.00mA</text>
<text x="396" y="355.2" font-family='"Liberation Mono", monospace' font-size="5.4" font-weight="normal" fill="#686868" text-anchor="start" textLength="44.2" lengthAdjust="spacingAndGlyphs" >voltage:3961.00mV</text>
<text x="396" y="360.1" font-family='"Liberation Mono", monospace' font-size="5.4" font-weight="normal" fill="#686868" text-anchor="start" textLength="41.6" lengthAdjust="spacingAndGlyphs" >power:-3533.21mW</text>
<rect x="716" y="309.4" width="3.8" height="3.6" fill="#c010c0"/>
<text x="722" y="312.9" font-family='"Liberation Mono", monospace' font-size="5.4" font-weight="normal" fill="#707080" text-anchor="start" textLength="18.2" lengthAdjust="spacingAndGlyphs" >current</text>
<rect x="716" y="317.85" width="3.8" height="3.6" fill="#10c020"/>
<text x="722" y="321.35" font-family='"Liberation Mono", monospace' font-size="5.4" font-weight="normal" fill="#707080" text-anchor="start" textLength="18.2" lengthAdjust="spacingAndGlyphs" >voltage</text>
<rect x="716" y="326.3" width="3.8" height="3.6" fill="#d09a20"/>
<text x="722" y="329.8" font-family='"Liberation Mono", monospace' font-size="5.4" font-weight="normal" fill="#707080" text-anchor="start" textLength="13" lengthAdjust="spacingAndGlyphs" >power</text>
  <!-- slider -->
  <line x1="172" y1="429" x2="702" y2="429" stroke="#7280d4" stroke-width="1.6"/>
  <rect x="161" y="426.2" width="11.3" height="6.6" rx="3" fill="#707070"/>
  <rect x="701" y="426.2" width="11.7" height="6.6" rx="3" fill="#606060"/>
</svg>
<div class="abs" id="bot"></div>
<svg width="750" height="447" viewBox="0 0 750 447">
 <g fill="none" stroke="rgba(90,90,90,0.22)" stroke-width="2.6" stroke-linecap="round">
  <path d="M666.3 402.3 A19.5 19.5 0 0 0 653.5 426"/>
  <path d="M669.7 406.5 A14 14 0 0 0 660.7 423.5"/>
  <path d="M667.5 412.9 A8 8 0 0 0 665.4 421.4"/>
  <path d="M675 407.2 H687 A6.2 5 0 1 0 684.8 411.2"/>
  <path d="M673 415.4 H690 L689.5 429 Q689 434.6 684.5 434.4"/>
  <path d="M679.5 416.8 Q677 423 669.7 425.4"/>
  <path d="M701.7 404.6 L695.1 416.7"/>
  <path d="M698.6 410.1 H715.2"/>
  <path d="M706.7 403 V430.2"/>
  <path d="M698.6 420.2 H715.2"/>
  <path d="M694.1 430.7 H719.3"/>
  <path d="M722.3 404 L726.3 408.6"/>
  <path d="M721.3 412.6 L725.3 416.7"/>
  <path d="M723.3 429.7 L729.3 420.2"/>
  <path d="M744.5 403 L731.4 406"/>
  <path d="M729.3 415.1 H746.5"/>
  <path d="M739.4 406 V422"/>
  <rect x="732.4" y="422.2" width="13.1" height="11.1" rx="3"/>
 </g>
 <rect x="650.5" y="436.2" width="99.5" height="10.8" fill="rgba(80,80,80,0.25)"/>
 <text x="651" y="445.4" font-family='"Liberation Mono", monospace' font-size="8.5" fill="rgba(255,255,255,0.75)" textLength="97.5" lengthAdjust="spacing">www.3glife.net</text>
</svg>

</body></html>
